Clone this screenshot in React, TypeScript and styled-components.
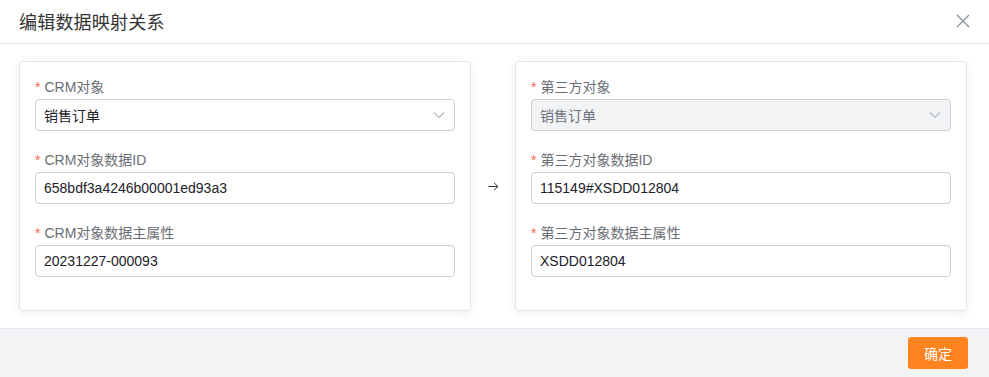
import React from 'react';
import styled, { createGlobalStyle } from 'styled-components';

const FONT = '"Liberation Sans", "Noto Sans CJK SC", sans-serif';

type Field = { label: string; value: string; kind: 'select' | 'input'; disabled?: boolean };

const crmFields: Field[] = [
  { label: 'CRM对象', value: '销售订单', kind: 'select' },
  { label: 'CRM对象数据ID', value: '658bdf3a4246b00001ed93a3', kind: 'input' },
  { label: 'CRM对象数据主属性', value: '20231227-000093', kind: 'input' },
];

const thirdFields: Field[] = [
  { label: '第三方对象', value: '销售订单', kind: 'select', disabled: true },
  { label: '第三方对象数据ID', value: '115149#XSDD012804', kind: 'input' },
  { label: '第三方对象数据主属性', value: 'XSDD012804', kind: 'input' },
];

export default function App() {
  return (
    <>
      <GlobalStyle />
      <Dialog>
        <Header>
          <Title>编辑数据映射关系</Title>
          <CloseButton aria-label="close">
            <svg width="14" height="14" viewBox="0 0 14 14">
              <path d="M1 1L13 13M13 1L1 13" stroke="#86909c" strokeWidth="1.3" fill="none" />
            </svg>
          </CloseButton>
        </Header>

        <Body>
          <FieldCard fields={crmFields} />
          <Arrow>
            <svg width="11" height="9" viewBox="0 0 11 9">
              <path d="M0.5 4.5H10M6 0.8L10 4.5L6 8.2" stroke="#333333" strokeWidth="1" fill="none" />
            </svg>
          </Arrow>
          <FieldCard fields={thirdFields} />
        </Body>

        <Footer>
          <ConfirmButton>确定</ConfirmButton>
        </Footer>
      </Dialog>
    </>
  );
}

function FieldCard({ fields }: { fields: Field[] }) {
  return (
    <Card>
      {fields.map((field) => (
        <FormItem key={field.label}>
          <Label>
            <Required>*</Required>
            {field.label}
          </Label>
          {field.kind === 'select' ? (
            <SelectBox $disabled={!!field.disabled}>
              <span>{field.value}</span>
              <svg width="12" height="8" viewBox="0 0 12 8">
                <path d="M1 1.5L6 6.5L11 1.5" stroke="#b4b9c2" strokeWidth="1.1" fill="none" />
              </svg>
            </SelectBox>
          ) : (
            <TextInput defaultValue={field.value} />
          )}
        </FormItem>
      ))}
    </Card>
  );
}

const GlobalStyle = createGlobalStyle`
  html, body {
    margin: 0;
    padding: 0;
    background: #ffffff;
    font-family: ${FONT};
  }
  * {
    box-sizing: border-box;
  }
`;

const Dialog = styled.div`
  width: 989px;
  height: 377px;
  display: flex;
  flex-direction: column;
  background: #ffffff;
`;

const Header = styled.div`
  height: 45px;
  display: flex;
  align-items: center;
  justify-content: space-between;
  padding: 0 19px 1px 19px;
  border-bottom: 1px solid #e5e6eb;
`;

const Title = styled.div`
  font-size: 18px;
  color: #333333;
  letter-spacing: 0.2px;
`;

const CloseButton = styled.button`
  display: flex;
  align-items: center;
  justify-content: center;
  width: 20px;
  height: 20px;
  padding: 0;
  margin-right: -3px;
  border: none;
  background: transparent;
  cursor: pointer;
`;

const Body = styled.div`
  flex: 1;
  display: flex;
  align-items: center;
  padding: 17px 22px 17px 19px;
`;

const Card = styled.div`
  width: 452px;
  height: 250px;
  padding: 14px 15px 15px 15px;
  border: 1px solid #e5e6eb;
  border-radius: 4px;
  background: #ffffff;
  box-shadow: 0 2px 10px rgba(0, 0, 0, 0.07);
`;

const Arrow = styled.div`
  width: 44px;
  display: flex;
  justify-content: center;
  padding-left: 1px;
`;

const FormItem = styled.div`
  display: flex;
  flex-direction: column;
  margin-bottom: 18px;
`;

const Label = styled.div`
  height: 22px;
  line-height: 22px;
  margin-bottom: 1px;
  font-size: 14px;
  color: #6b6f75;
`;

const Required = styled.span`
  color: #f76a4f;
  margin-right: 4px;
`;

const SelectBox = styled.div<{ $disabled: boolean }>`
  height: 32px;
  display: flex;
  align-items: center;
  justify-content: space-between;
  padding: 0 9px 0 8px;
  border: 1px solid #c9cdd4;
  border-radius: 4px;
  font-size: 14px;
  color: ${({ $disabled }) => ($disabled ? '#6b7079' : '#1d2129')};
  background: ${({ $disabled }) => ($disabled ? '#f2f3f5' : '#ffffff')};
`;

const TextInput = styled.input`
  height: 32px;
  padding: 0 8px;
  border: 1px solid #c9cdd4;
  border-radius: 4px;
  font-family: ${FONT};
  font-size: 14px;
  color: #1d2129;
  background: #ffffff;
  outline: none;
`;

const Footer = styled.div`
  height: 49px;
  display: flex;
  justify-content: flex-end;
  align-items: flex-start;
  padding: 8px 21px 0 0;
  border-top: 1px solid #e5e6eb;
  background: #f2f3f5;
`;

const ConfirmButton = styled.button`
  width: 60px;
  height: 32px;
  border: none;
  border-radius: 3px;
  background: #ff8420;
  color: #ffffff;
  font-family: ${FONT};
  font-size: 14px;
  cursor: pointer;
`;
